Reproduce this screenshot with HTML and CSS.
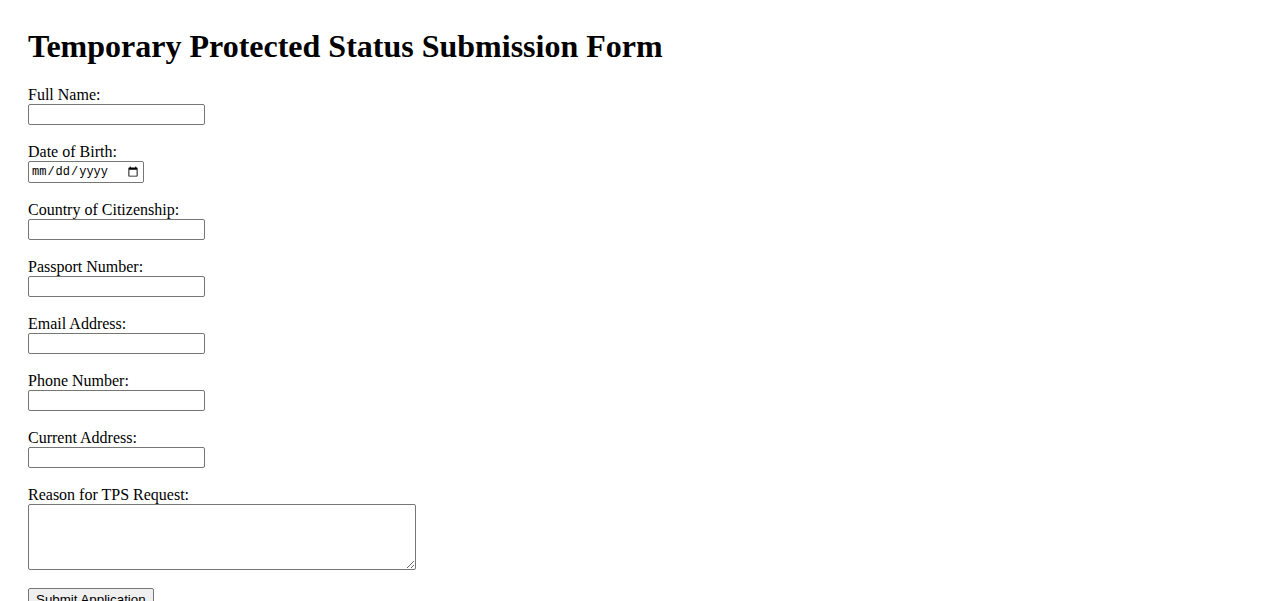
FILE: index.html
```html
<!DOCTYPE html>
<html lang="en">
<head>
<meta charset="utf-8">
<title>Temporary Protected Status Submission Form</title>
<link rel="stylesheet" href="styles.css">
</head>
<body>
<main class="page">
  <h1 class="title">Temporary Protected Status Submission Form</h1>
  <form class="form">
    <div class="field">
      <label class="label" for="name">Full Name:</label>
      <input class="input" type="text" id="name">
    </div>
    <div class="field">
      <label class="label" for="dob">Date of Birth:</label>
      <input class="input date" type="date" id="dob">
    </div>
    <div class="field">
      <label class="label" for="country">Country of Citizenship:</label>
      <input class="input" type="text" id="country">
    </div>
    <div class="field">
      <label class="label" for="passport">Passport Number:</label>
      <input class="input" type="text" id="passport">
    </div>
    <div class="field">
      <label class="label" for="email">Email Address:</label>
      <input class="input" type="email" id="email">
    </div>
    <div class="field">
      <label class="label" for="phone">Phone Number:</label>
      <input class="input" type="tel" id="phone">
    </div>
    <div class="field">
      <label class="label" for="address">Current Address:</label>
      <input class="input" type="text" id="address">
    </div>
    <div class="field">
      <label class="label" for="reason">Reason for TPS Request:</label>
      <textarea class="textarea" id="reason"></textarea>
    </div>
    <button class="submit" type="submit">Submit Application</button>
  </form>
</main>
</body>
</html>
```
FILE: styles.css
```css
html, body {
  margin: 0;
  padding: 0;
  background: #fff;
}
body {
  font-family: "Liberation Serif", "Times New Roman", serif;
  font-size: 16px;
  color: #000;
}
.page {
  padding: 7px 28px 0 28px;
}
.title {
  font-size: 32px;
  font-weight: bold;
  margin: 21px 0 21px 0;
  line-height: 37px;
}
.form {
  display: flex;
  flex-direction: column;
  align-items: flex-start;
}
.field {
  display: flex;
  flex-direction: column;
  align-items: flex-start;
  margin-bottom: 18px;
}
.label {
  line-height: 18px;
  height: 18px;
}
.input {
  box-sizing: border-box;
  width: 177px;
  height: 21px;
  margin: 0;
  padding: 1px 2px;
  border: 1px solid #767676;
  border-radius: 2px;
  font-family: "Liberation Sans", Arial, sans-serif;
  font-size: 13.33px;
  background: #fff;
}
.date {
  width: 116px;
  height: 22px;
  font-family: "Liberation Mono", monospace;
  font-size: 12px;
}
.textarea {
  box-sizing: border-box;
  width: 388px;
  height: 66px;
  margin: 0;
  padding: 2px;
  border: 1px solid #767676;
  border-radius: 2px;
  font-family: "Liberation Mono", monospace;
  font-size: 13.33px;
  resize: both;
}
.submit {
  box-sizing: border-box;
  height: 22px;
  margin: 0;
  padding: 1px 7px;
  border: 1px solid #767676;
  border-radius: 2px;
  background: #efefef;
  font-family: "Liberation Sans", Arial, sans-serif;
  font-size: 13.33px;
  color: #000;
}
```
